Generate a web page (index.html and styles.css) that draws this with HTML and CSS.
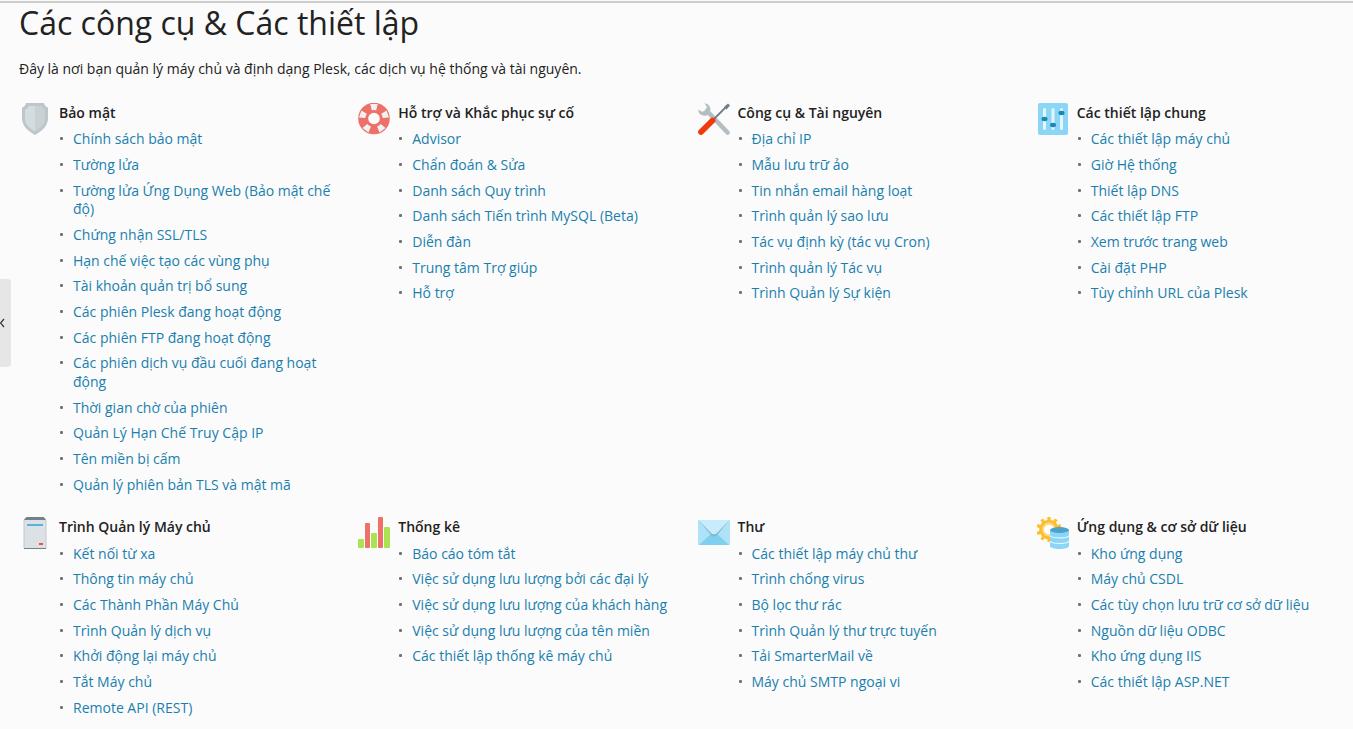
FILE: index.html
```html
<!DOCTYPE html>
<html lang="vi">
<head>
<meta charset="utf-8">
<title>Các công cụ &amp; Các thiết lập</title>
<link rel="stylesheet" href="styles.css">
</head>
<body>
<button class="sidebar-toggle" type="button" aria-label="Thu gọn">
  <svg class="sidebar-toggle-icon" viewBox="0 0 6 10"><path d="M4 1 .5 5 4 9" fill="none" stroke="#333" stroke-width="1.200"/></svg>
</button>
<main class="page">
  <h1 class="title">Các công cụ &amp; Các thiết lập</h1>
  <p class="intro">Đây là nơi bạn quản lý máy chủ và định dạng Plesk, các dịch vụ hệ thống và tài nguyên.</p>
  <div class="groups">
    <section class="group">
      <svg class="icon" viewBox="0 0 32 32">
        <path d="M7 0h18c.5 2.500 2 4 4 4.500V15c0 7.500-5 12.500-13 17C8 27.500 3 22.500 3 15V4.500C5 4 6.500 2.500 7 0z" fill="#bdc7cb"/>
        <path d="M16 3H9.500C9 5 8 6 6 6.800V15c0 6 4 10 10 13.500z" fill="#d5dce0"/>
        <path d="M16 3h6.500c.5 2 1.500 3 3.500 3.800V15c0 6-4 10-10 13.500z" fill="#c9d1d5"/>
      </svg>
      <div class="group-body">
        <h2 class="group-title">Bảo mật</h2>
        <ul class="links">
          <li><a href="#">Chính sách bảo mật</a></li>
          <li><a href="#">Tường lửa</a></li>
          <li><a href="#">Tường lửa Ứng Dụng Web (Bảo mật chế độ)</a></li>
          <li><a href="#">Chứng nhận SSL/TLS</a></li>
          <li><a href="#">Hạn chế việc tạo các vùng phụ</a></li>
          <li><a href="#">Tài khoản quản trị bổ sung</a></li>
          <li><a href="#">Các phiên Plesk đang hoạt động</a></li>
          <li><a href="#">Các phiên FTP đang hoạt động</a></li>
          <li><a href="#">Các phiên dịch vụ đầu cuối đang hoạt động</a></li>
          <li><a href="#">Thời gian chờ của phiên</a></li>
          <li><a href="#">Quản Lý Hạn Chế Truy Cập IP</a></li>
          <li><a href="#">Tên miền bị cấm</a></li>
          <li><a href="#">Quản lý phiên bản TLS và mật mã</a></li>
        </ul>
      </div>
    </section>
    <section class="group">
      <svg class="icon" viewBox="0 0 32 32">
        <circle cx="16" cy="15.500" r="10.800" fill="none" stroke="#ec7168" stroke-width="10"/>
        <g fill="#f0f1f2">
          <path id="band" d="M12.300 1h7.400l-1.500 6.200q-2.200-.6-4.400 0z"/>
          <use href="#band" transform="rotate(72 16 15.500)"/>
          <use href="#band" transform="rotate(144 16 15.500)"/>
          <use href="#band" transform="rotate(216 16 15.500)"/>
          <use href="#band" transform="rotate(288 16 15.500)"/>
        </g>
      </svg>
      <div class="group-body">
        <h2 class="group-title">Hỗ trợ và Khắc phục sự cố</h2>
        <ul class="links">
          <li><a href="#">Advisor</a></li>
          <li><a href="#">Chẩn đoán &amp; Sửa</a></li>
          <li><a href="#">Danh sách Quy trình</a></li>
          <li><a href="#">Danh sách Tiến trình MySQL (Beta)</a></li>
          <li><a href="#">Diễn đàn</a></li>
          <li><a href="#">Trung tâm Trợ giúp</a></li>
          <li><a href="#">Hỗ trợ</a></li>
        </ul>
      </div>
    </section>
    <section class="group">
      <svg class="icon" viewBox="0 0 32 32">
        <path d="M9 8l20.500 21.500" stroke="#b4bdc2" stroke-width="4.600" stroke-linecap="round"/>
        <path d="M6.500.3A6 6 0 0 1 12 8.500 6 6 0 0 1 .3 6.500L4 8.800l4-1.300.8-3.800z" fill="#b4bdc2"/>
        <path d="M15 17 27.500 4.500" stroke="#6f7d84" stroke-width="1.800"/>
        <path d="M26 4 30 .5 32 2.500 28.500 6.500z" fill="#6f7d84"/>
        <path d="M3 29 14.500 17.500" stroke="#f2390b" stroke-width="5.800" stroke-linecap="round"/>
      </svg>
      <div class="group-body">
        <h2 class="group-title">Công cụ &amp; Tài nguyên</h2>
        <ul class="links">
          <li><a href="#">Địa chỉ IP</a></li>
          <li><a href="#">Mẫu lưu trữ ảo</a></li>
          <li><a href="#">Tin nhắn email hàng loạt</a></li>
          <li><a href="#">Trình quản lý sao lưu</a></li>
          <li><a href="#">Tác vụ định kỳ (tác vụ Cron)</a></li>
          <li><a href="#">Trình quản lý Tác vụ</a></li>
          <li><a href="#">Trình Quản lý Sự kiện</a></li>
        </ul>
      </div>
    </section>
    <section class="group">
      <svg class="icon" viewBox="0 0 32 32">
        <rect x="1" width="30" height="32" rx="2" fill="#8bd5f7"/>
        <path d="M7.500 6.500v19M16 6.500v19M24.500 6.500v19" stroke="#e3f5fd" stroke-width="3" stroke-linecap="round"/>
        <g fill="#1a87b9"><ellipse cx="7.500" cy="16" rx="3" ry="2.200"/><ellipse cx="16" cy="22" rx="3" ry="2.200"/><ellipse cx="24.500" cy="10" rx="3" ry="2.200"/></g>
      </svg>
      <div class="group-body">
        <h2 class="group-title">Các thiết lập chung</h2>
        <ul class="links">
          <li><a href="#">Các thiết lập máy chủ</a></li>
          <li><a href="#">Giờ Hệ thống</a></li>
          <li><a href="#">Thiết lập DNS</a></li>
          <li><a href="#">Các thiết lập FTP</a></li>
          <li><a href="#">Xem trước trang web</a></li>
          <li><a href="#">Cài đặt PHP</a></li>
          <li><a href="#">Tùy chỉnh URL của Plesk</a></li>
        </ul>
      </div>
    </section>
    <section class="group">
      <svg class="icon" viewBox="0 0 32 32">
        <path d="M7.500 0h17L27 2.500V32H5V2.500z" fill="#73818a"/>
        <path d="M5 3h22v28H5z" fill="#dbe1e4"/>
        <path d="M5 3v28M27 3v28" stroke="#c0c9ce"/>
        <path d="M8 7h16v2H8z" fill="#58b4de"/>
        <path d="M20 26h4v2h-4z" fill="#f84c3b"/>
      </svg>
      <div class="group-body">
        <h2 class="group-title">Trình Quản lý Máy chủ</h2>
        <ul class="links">
          <li><a href="#">Kết nối từ xa</a></li>
          <li><a href="#">Thông tin máy chủ</a></li>
          <li><a href="#">Các Thành Phần Máy Chủ</a></li>
          <li><a href="#">Trình Quản lý dịch vụ</a></li>
          <li><a href="#">Khởi động lại máy chủ</a></li>
          <li><a href="#">Tắt Máy chủ</a></li>
          <li><a href="#">Remote API (REST)</a></li>
        </ul>
      </div>
    </section>
    <section class="group">
      <svg class="icon" viewBox="0 0 32 32">
        <g fill="#a9e34f"><rect y="22" width="6" height="9" rx="1"/><rect x="13" y="16" width="6" height="15" rx="1"/><rect x="26" y="10" width="6" height="21" rx="1"/></g>
        <g fill="#ec7168"><rect x="7" y="6" width="5" height="25" rx="1"/><rect x="20" width="5" height="31" rx="1"/></g>
      </svg>
      <div class="group-body">
        <h2 class="group-title">Thống kê</h2>
        <ul class="links">
          <li><a href="#">Báo cáo tóm tắt</a></li>
          <li><a href="#">Việc sử dụng lưu lượng bởi các đại lý</a></li>
          <li><a href="#">Việc sử dụng lưu lượng của khách hàng</a></li>
          <li><a href="#">Việc sử dụng lưu lượng của tên miền</a></li>
          <li><a href="#">Các thiết lập thống kê máy chủ</a></li>
        </ul>
      </div>
    </section>
    <section class="group">
      <svg class="icon" viewBox="0 0 32 32">
        <rect y="3" width="32" height="25" rx="1" fill="#aee2f8"/>
        <path d="M1 28 14 16h4l13 12z" fill="#7fcfef"/>
        <path d="M1 3h30L19 17.500q-3 2.500-6 0z" fill="#c8ecfb"/>
        <path d="M1 3.500 13 16q3 2.500 6 0L31 3.500 19 18.300q-3 2.500-6 0z" fill="#83b7cd"/>
      </svg>
      <div class="group-body">
        <h2 class="group-title">Thư</h2>
        <ul class="links">
          <li><a href="#">Các thiết lập máy chủ thư</a></li>
          <li><a href="#">Trình chống virus</a></li>
          <li><a href="#">Bộ lọc thư rác</a></li>
          <li><a href="#">Trình Quản lý thư trực tuyến</a></li>
          <li><a href="#">Tải SmarterMail về</a></li>
          <li><a href="#">Máy chủ SMTP ngoại vi</a></li>
        </ul>
      </div>
    </section>
    <section class="group">
      <svg class="icon" viewBox="0 0 32 32">
        <g stroke="#fdbd2c" stroke-width="3.200">
          <path id="teeth" d="M12 0v25"/>
          <use href="#teeth" transform="rotate(36 12 12.500)"/>
          <use href="#teeth" transform="rotate(72 12 12.500)"/>
          <use href="#teeth" transform="rotate(108 12 12.500)"/>
          <use href="#teeth" transform="rotate(144 12 12.500)"/>
        </g>
        <circle cx="12" cy="12.500" r="7.500" fill="#fff" stroke="#fdbd2c" stroke-width="4.600"/>
        <circle cx="12" cy="12.500" r="6" fill="none" stroke="#fdd984" stroke-width="1.800"/>
        <path d="M13 13v16c0 4 19 4 19 0V13z" fill="#8bd5f7"/>
        <ellipse cx="22.500" cy="13" rx="9.500" ry="3" fill="#4aa3cb"/>
        <path d="M13 18.500c2 3.300 17 3.300 19 0M13 24c2 3.300 17 3.300 19 0" fill="none" stroke="#e5f6fd" stroke-width="1.200"/>
      </svg>
      <div class="group-body">
        <h2 class="group-title">Ứng dụng &amp; cơ sở dữ liệu</h2>
        <ul class="links">
          <li><a href="#">Kho ứng dụng</a></li>
          <li><a href="#">Máy chủ CSDL</a></li>
          <li><a href="#">Các tùy chọn lưu trữ cơ sở dữ liệu</a></li>
          <li><a href="#">Nguồn dữ liệu ODBC</a></li>
          <li><a href="#">Kho ứng dụng IIS</a></li>
          <li><a href="#">Các thiết lập ASP.NET</a></li>
        </ul>
      </div>
    </section>
  </div>
</main>
</body>
</html>
```
FILE: styles.css
```css
* { box-sizing: border-box; }

body {
  margin: 0;
  background: #fbfbfb;
  color: #222;
  font: 14px/1.3333 "Open Sans", "Noto Sans", sans-serif;
}

.page {
  padding: 2px 0 12px 19px;
  border-top: 2px solid #ccc;
  margin-top: 1px;
}

.title {
  margin: 0;
  font-size: 32px;
  line-height: 36px;
  font-weight: 400;
}

.intro {
  margin: 19px 0 24px;
}

.groups {
  display: grid;
  grid-template-columns: repeat(4, minmax(0, 1fr));
  gap: 23px;
}

.group {
  display: flex;
  align-items: flex-start;
  gap: 8px;
}

.icon {
  flex: none;
  width: 32px;
  height: 32px;
}

.group-body {
  flex: 1;
  min-width: 0;
  padding-top: 1px;
}

.group-title {
  margin: 0 0 8px;
  font-size: 14px;
  font-weight: 600;
}

.links {
  display: flex;
  flex-direction: column;
  gap: 7px;
  margin: 0;
  padding: 0;
  list-style: none;
}

.links li {
  display: flex;
}

.links li::before {
  content: "";
  flex: none;
  width: 3px;
  height: 3px;
  margin: 7px 10px 0 1px;
  border-radius: 1px;
  background: #737373;
}

.links a {
  color: #1a7fae;
  text-decoration: none;
}

.links a:hover {
  text-decoration: underline;
}

.sidebar-toggle {
  position: fixed;
  top: 279px;
  left: 0;
  width: 11px;
  height: 88px;
  padding: 0;
  border: 0;
  border-radius: 0 3px 3px 0;
  background: #e6e6e6;
  display: flex;
  align-items: center;
}

.sidebar-toggle-icon {
  width: 6px;
  height: 10px;
}
```
